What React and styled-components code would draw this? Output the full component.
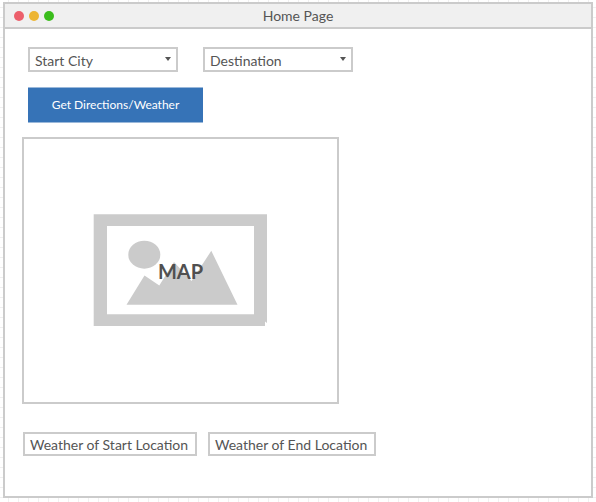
import React from 'react';
import styled, { createGlobalStyle } from 'styled-components';

const GlobalStyle = createGlobalStyle`
  * { box-sizing: border-box; }
  body {
    margin: 0;
    background: #fff;
    color: #555;
    font-family: Lato, sans-serif;
    overflow: hidden;
  }
`;

const Canvas = styled.div`
  width: 596px;
  height: 502px;
  padding: 2px 3px 4px;
  background-color: #fff;
  background-image:
    linear-gradient(to right, #f0f0f0 1px, transparent 1px),
    linear-gradient(to bottom, #f0f0f0 1px, transparent 1px);
  background-size: 10px 10px;
  background-position: 8px 7px;
`;

const Window = styled.section`
  width: 590px;
  height: 496px;
  border: 2px solid #cbcbcb;
  background: #fff;
`;

const TitleBar = styled.header`
  display: grid;
  grid-template-columns: 60px 1fr 60px;
  align-items: center;
  height: 25px;
  border-bottom: 2px solid #cbcbcb;
  background: #f0f0f0;
`;

const Lights = styled.div`
  display: flex;
  gap: 5px;
  padding-left: 9px;
`;

const Light = styled.span`
  width: 10px;
  height: 10px;
  border-radius: 50%;
  background: ${(p) => p.$color};
`;

const Title = styled.h1`
  margin: 0;
  padding-top: 1px;
  font-size: 14px;
  font-weight: 400;
  line-height: 20px;
  letter-spacing: 0;
  text-align: center;
`;

const Content = styled.main`
  display: flex;
  flex-direction: column;
  align-items: flex-start;
  padding: 18px 17px 0;
`;

const SelectRow = styled.div`
  display: flex;
  gap: 25px;
  margin-left: 6px;
`;

const Select = styled.div`
  display: flex;
  align-items: center;
  justify-content: space-between;
  width: 150px;
  height: 25px;
  padding: 3px 5px 0;
  border: 2px solid #cbcbcb;
  font-size: 14px;
  line-height: 20px;
`;

const Caret = styled.svg`
  display: block;
  width: 6px;
  height: 4px;
  margin-top: -5px;
`;

const Button = styled.button`
  width: 175px;
  height: 36px;
  margin: 15px 0 14px 6px;
  padding: 0;
  border: solid #9ab8da;
  border-width: 1px 0;
  background: #3673b7;
  color: #fff;
  font: 400 12px/34px Lato, sans-serif;
`;

const MapPanel = styled.div`
  display: grid;
  place-items: center;
  width: 317px;
  height: 267px;
  border: 2px solid #cbcbcb;
`;

const Picture = styled.svg`
  grid-area: 1 / 1;
  display: block;
  width: 313px;
  height: 263px;
`;

const MapLabel = styled.span`
  grid-area: 1 / 1;
  color: #505050;
  font-size: 20px;
  font-weight: 700;
  line-height: 24px;
`;

const WeatherRow = styled.div`
  display: flex;
  gap: 11px;
  margin: 28px 0 0 1px;
`;

const WeatherBox = styled.div`
  width: ${(p) => p.$width}px;
  height: 24px;
  padding: 1px 0 0 5px;
  border: 2px solid #cbcbcb;
  font-size: 14px;
  line-height: 20px;
  white-space: nowrap;
`;

function Dropdown({ label }) {
  return (
    <Select>
      {label}
      <Caret viewBox="0 0 6 4"><path d="M0 0h6L3 4z" fill="#555" /></Caret>
    </Select>
  );
}

export default function App() {
  return (
    <>
      <GlobalStyle />
      <Canvas>
        <Window>
          <TitleBar>
            <Lights>
              <Light $color="#ec5f6b" />
              <Light $color="#edb533" />
              <Light $color="#3bbd1c" />
            </Lights>
            <Title>Home Page</Title>
          </TitleBar>
          <Content>
            <SelectRow>
              <Dropdown label="Start City" />
              <Dropdown label="Destination" />
            </SelectRow>
            <Button>Get Directions/Weather</Button>
            <MapPanel>
              <Picture viewBox="24 139 313 263" fill="#cbcbcb">
                <path
                  fillRule="evenodd"
                  d="M93.7 214.3H267V323L265 321.5V326H93.7zM107 226V314.2H254V226z"
                />
                <ellipse cx="144.3" cy="254.7" rx="16" ry="14" />
                <path d="M126.5 304.8L144.5 275.5L159.3 285.5L174 262L191.5 281L211.3 250.8L237.5 304.8z" />
              </Picture>
              <MapLabel>MAP</MapLabel>
            </MapPanel>
            <WeatherRow>
              <WeatherBox $width={174}>Weather of Start Location</WeatherBox>
              <WeatherBox $width={168}>Weather of End Location</WeatherBox>
            </WeatherRow>
          </Content>
        </Window>
      </Canvas>
    </>
  );
}
